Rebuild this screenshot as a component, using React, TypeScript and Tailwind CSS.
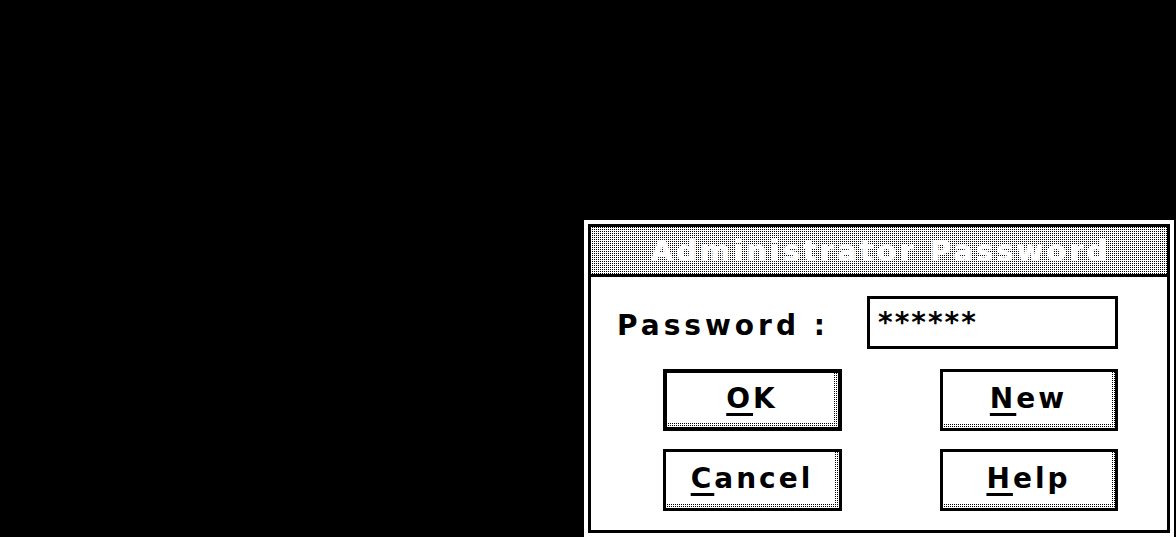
const dither =
  'bg-[image:conic-gradient(#000_0_25%,#fff_0_100%)] bg-[length:2px_2px]'

interface DlgButtonProps {
  hot: string
  rest: string
  isDefault?: boolean
  width: string
}

function DlgButton({ hot, rest, isDefault, width }: DlgButtonProps) {
  return (
    <button
      className={`${width} h-[62px] flex border-black ${dither} ${
        isDefault ? 'border-4' : 'border-[3px]'
      }`}
    >
      <span className="flex-1 mr-[4px] mb-[4px] bg-white flex items-center justify-center text-[28px] font-bold tracking-[3px] text-black leading-none pl-[3px] pt-[2px]">
        <span className="underline decoration-[3px] underline-offset-[5px]">{hot}</span>
        {rest}
      </span>
    </button>
  )
}

export default function App() {
  return (
    <div className="w-[1176px] h-[537px] bg-black overflow-hidden pl-[584px] pt-[220px] font-['DejaVu_Sans',Verdana,sans-serif]">
      <div className="w-[590px] border-4 border-white bg-white">
        <div className="border-[3px] border-black">
          {/* title bar */}
          <div
            className={`h-[50px] border-b-[3px] border-black flex items-center justify-center ${dither}`}
          >
            <span className="text-[29px] font-bold tracking-[3px] pl-[3px] text-white leading-none pt-[2px] [text-shadow:0_0_1px_#fff]">
              Administrator Password
            </span>
          </div>

          {/* body */}
          <div className="bg-white h-[253px] pt-[19px]">
            <div className="flex items-center">
              <div className="ml-[26px] w-[250px] text-[28px] font-bold tracking-[4px] text-black leading-none pt-[6px]">
                Password :
              </div>
              <div className="w-[251px] h-[53px] border-[3px] border-black flex items-center pl-[8px]">
                <span className="text-[28px] font-bold tracking-[2px] text-black leading-none">
                  ******
                </span>
              </div>
            </div>

            <div className="mt-[20px] pl-[72px] grid grid-cols-[179px_178px] gap-x-[98px] gap-y-[18px]">
              <DlgButton hot="O" rest="K" isDefault width="w-[179px]" />
              <DlgButton hot="N" rest="ew" width="w-[178px]" />
              <DlgButton hot="C" rest="ancel" width="w-[179px]" />
              <DlgButton hot="H" rest="elp" width="w-[178px]" />
            </div>
          </div>
        </div>
      </div>
    </div>
  )
}
